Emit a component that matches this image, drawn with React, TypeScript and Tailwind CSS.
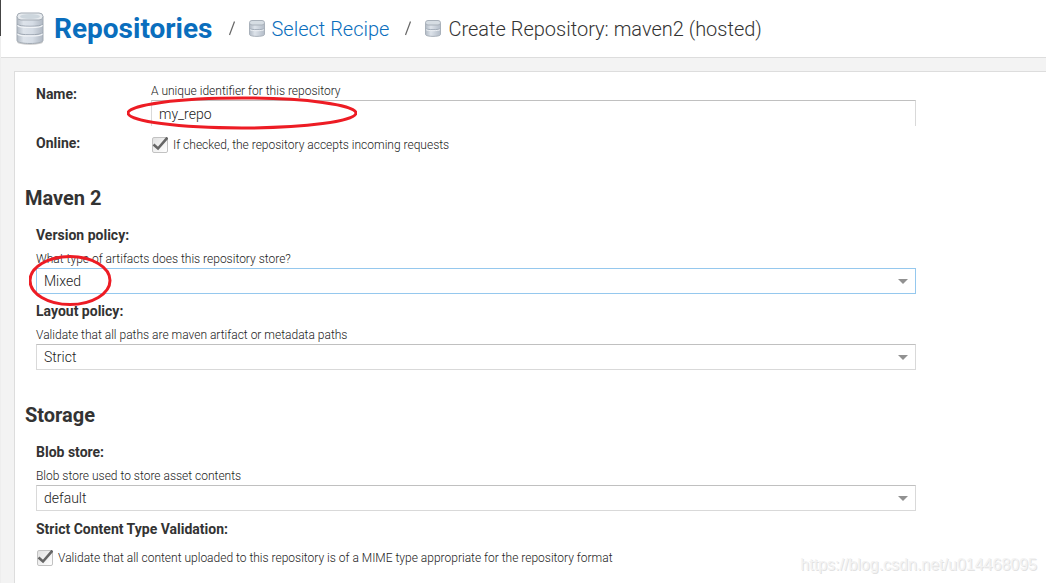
import { useState } from 'react';
import type { ReactNode } from 'react';

function DatabaseIcon({ large = false }: { large?: boolean }) {
  if (large) {
    return (
      <svg width="30" height="34" viewBox="0 0 30 34" className="shrink-0" aria-hidden="true">
        <defs>
          <linearGradient id="disk-lg" x1="0" x2="1" y1="0" y2="0">
            <stop offset="0" stopColor="#b3bbc5" />
            <stop offset="0.25" stopColor="#dde3ea" />
            <stop offset="0.6" stopColor="#d5dce5" />
            <stop offset="1" stopColor="#b0b8c3" />
          </linearGradient>
        </defs>
        <ellipse cx="15" cy="30" rx="13" ry="3" fill="#d4d4d4" />
        <path d="M2 4.500v24c0 4 26 4 26 0v-24z" fill="url(#disk-lg)" stroke="#a3abb4" />
        <path d="M2 12c1 3 25 3 26 0M2 20.500c1 3 25 3 26 0" fill="none" stroke="#9fa8b3" />
        <path d="M2.500 13.200c1 3 24 3 25 0M2.500 21.700c1 3 24 3 25 0" fill="none" stroke="#f1f4f7" strokeWidth="1.200" />
        <rect x="2" y="1" width="26" height="7" rx="4" fill="#e6eaee" stroke="#a3abb4" />
        <ellipse cx="15" cy="4.500" rx="10" ry="2.400" fill="#cdd6dd" />
      </svg>
    );
  }
  return (
    <svg width="16" height="17" viewBox="0 0 16 17" className="shrink-0" aria-hidden="true">
      <defs>
        <linearGradient id="disk-sm" x1="0" x2="1" y1="0" y2="0">
          <stop offset="0" stopColor="#b0b9c4" />
          <stop offset="0.35" stopColor="#dde3ea" />
          <stop offset="1" stopColor="#b3bcc8" />
        </linearGradient>
      </defs>
      <path d="M.5 3v11.500c0 2.500 15 2.500 15 0V3z" fill="url(#disk-sm)" stroke="#a9b1ba" />
      <path d="M.5 8.500c1 1.500 14 1.500 15 0" fill="none" stroke="#a3adb9" />
      <path d="M1 9.600c1 1.500 13 1.500 14 0" fill="none" stroke="#eef1f5" />
      <rect x="0.500" y="0.500" width="15" height="4.500" rx="2.500" fill="#d6dde3" stroke="#a9b1ba" />
    </svg>
  );
}

function Separator() {
  return (
    <svg width="6" height="15" viewBox="0 0 6 15" className="shrink-0" aria-hidden="true">
      <path d="M5.500 0.500L0.500 14" stroke="#666" strokeWidth="1.200" />
    </svg>
  );
}

function Helper({ children }: { children: ReactNode }) {
  return <p className="pt-px text-xs leading-[18px] font-light text-[#222]">{children}</p>;
}

function SectionTitle({ children }: { children: ReactNode }) {
  return <h2 className="mt-[31px] mb-[13px] pl-[10px] text-xl leading-7 font-bold text-[#333]">{children}</h2>;
}

interface SelectFieldProps {
  id: string;
  label: string;
  help: string;
  value: string;
  active?: boolean;
  children?: ReactNode;
}

function SelectField({ id, label, help, value, active, children }: SelectFieldProps) {
  return (
    <div className="mb-[7px] px-[21px]">
      <label htmlFor={id} className="mb-1 block text-sm leading-5 font-bold text-[#333]">
        {label}
      </label>
      <Helper>{help}</Helper>
      <div className="relative max-w-[880px]">
        <select
          id={id}
          defaultValue={value}
          className={
            active
              ? 'block h-[26px] w-full appearance-none border border-[#95c8ee] bg-white px-[7px] text-sm leading-5 font-light text-[#222] outline-none'
              : 'block h-[26px] w-full appearance-none border border-[#d9d9d9] border-t-[#c0c0c0] bg-white px-[7px] text-sm leading-5 font-light text-[#222] outline-none'
          }
        >
          <option>{value}</option>
        </select>
        <svg width="10" height="5" viewBox="0 0 10 5" className="pointer-events-none absolute top-[11px] right-2" aria-hidden="true">
          <path d="M0 0h10L5 5z" fill="#919191" />
        </svg>
        {children}
      </div>
    </div>
  );
}

function CheckField({ id, text }: { id: string; text: string }) {
  const [checked, setChecked] = useState(true);

  return (
    <div className="flex h-[19px] items-center gap-[5px] pt-[3px] pl-px">
      <span className="relative h-4 w-4 shrink-0">
        <input
          id={id}
          type="checkbox"
          checked={checked}
          onChange={(e) => setChecked(e.target.checked)}
          className="block h-4 w-4 appearance-none rounded-xs border border-[#c2c2c2] bg-linear-to-br from-[#e2e2e2] to-white"
        />
        {checked && (
          <svg width="16" height="16" viewBox="0 0 16 16" className="pointer-events-none absolute inset-0" aria-hidden="true">
            <path d="M1.500 7.500l4.500 4L15.500 0.500" fill="none" stroke="#666" strokeWidth="2.600" />
          </svg>
        )}
      </span>
      <label htmlFor={id} className="text-xs leading-4 font-light text-[#222]">
        {text}
      </label>
    </div>
  );
}

export default function App() {
  return (
    <div className="relative flex min-h-screen bg-[#f3f3f3] font-['Roboto',sans-serif]">
      <div className="w-px shrink-0 bg-[#eee]">
        <div className="h-9 bg-[#444]" />
      </div>

      <div className="flex min-w-0 flex-1 flex-col">
        <header className="border-b border-[#ddd] bg-white">
          <nav className="flex h-[57px] items-center pl-[14px] text-xl font-light whitespace-nowrap text-[#333]">
            <DatabaseIcon large />
            <a href="#repositories" className="mr-4 ml-[9px] text-[28px] leading-9 font-bold text-[#0a6ebd]">
              Repositories
            </a>
            <Separator />
            <a href="#recipe" className="mr-4 ml-[14px] flex items-center gap-[7px] leading-7 text-[#0a6ebd]">
              <DatabaseIcon />
              Select Recipe
            </a>
            <Separator />
            <span className="ml-[14px] flex items-center gap-[7px] leading-7">
              <DatabaseIcon />
              Create Repository: maven2 (hosted)
            </span>
          </nav>
        </header>

        <main className="mt-[13px] ml-[13px] flex-1 border-t border-l border-[#ddd] bg-white pt-[9px]">
          <form>
            <div className="flex max-w-[922px] px-[21px]">
              <label htmlFor="name" className="w-[115px] shrink-0 pt-[3px] text-sm leading-5 font-bold text-[#333]">
                Name:
              </label>
              <div className="flex-1">
                <Helper>A unique identifier for this repository</Helper>
                <div className="relative">
                  <input
                    id="name"
                    type="text"
                    defaultValue="my_repo"
                    className="block h-[26px] w-full border border-b-0 border-[#d9d9d9] border-t-[#c0c0c0] bg-white px-[7px] text-sm font-light text-[#222] outline-none"
                  />
                  <svg width="230" height="34" viewBox="0 0 230 34" className="pointer-events-none absolute -top-1 -left-6" aria-hidden="true">
                    <ellipse cx="115" cy="17" rx="114" ry="15" fill="none" stroke="#ed1c24" strokeWidth="3" />
                  </svg>
                </div>
              </div>
            </div>

            <div className="mt-2 flex px-[21px]">
              <span className="w-[115px] shrink-0 text-sm leading-[19px] font-bold text-[#333]">Online:</span>
              <CheckField id="online" text="If checked, the repository accepts incoming requests" />
            </div>

            <SectionTitle>Maven 2</SectionTitle>
            <SelectField
              id="version"
              label="Version policy:"
              help="What type of artifacts does this repository store?"
              value="Mixed"
              active
            >
              <svg width="84" height="52" viewBox="0 0 84 52" className="pointer-events-none absolute -top-[13px] -left-[7px]" aria-hidden="true">
                <ellipse cx="41" cy="25.500" rx="40" ry="24" fill="none" stroke="#ed1c24" strokeWidth="3" />
              </svg>
            </SelectField>
            <SelectField
              id="layout"
              label="Layout policy:"
              help="Validate that all paths are maven artifact or metadata paths"
              value="Strict"
            />

            <SectionTitle>Storage</SectionTitle>
            <SelectField id="blob" label="Blob store:" help="Blob store used to store asset contents" value="default" />

            <div className="mt-2 px-[21px]">
              <p className="mb-2 text-sm leading-5 font-bold text-[#333]">Strict Content Type Validation:</p>
              <CheckField
                id="strict"
                text="Validate that all content uploaded to this repository is of a MIME type appropriate for the repository format"
              />
            </div>
          </form>
        </main>
      </div>

      <div className="absolute right-[9px] bottom-2 font-['Liberation_Sans',sans-serif] text-base leading-5 text-[#f3f3f3] [text-shadow:1px_1px_0_#e2e2e2]">
        https://blog.csdn.net/u014468095
      </div>
    </div>
  );
}
